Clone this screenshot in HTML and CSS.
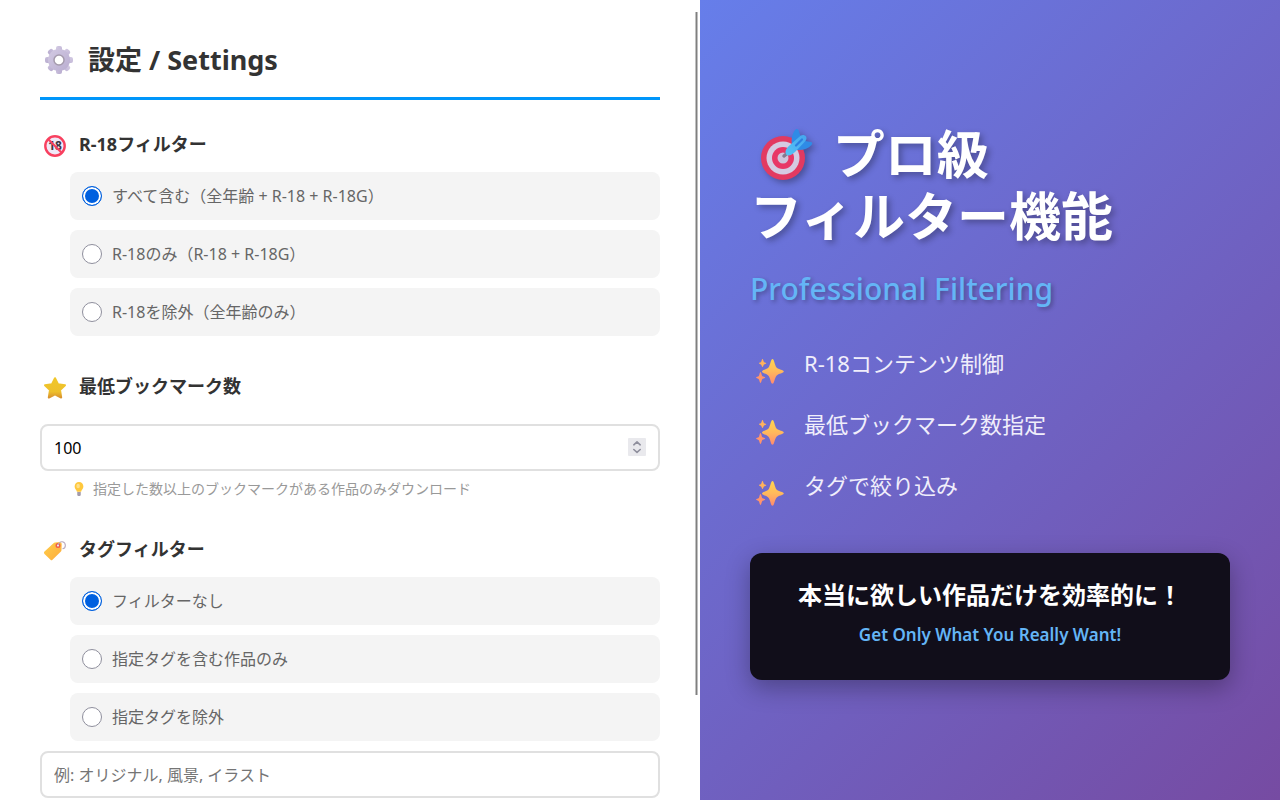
FILE: index.html
```html
<!DOCTYPE html>
<html lang="ja">

<head>
    <meta charset="UTF-8">
    <meta name="viewport" content="width=device-width, initial-scale=1.0">
    <title>設定 / Settings</title>
    <link rel="stylesheet" href="styles.css">
</head>

<body>

    <!-- shared sparkle icon -->
    <svg class="defs" width="0" height="0" aria-hidden="true">
        <defs>
            <linearGradient id="sparkGrad" x1="0" y1="0" x2="0" y2="1">
                <stop offset="0" stop-color="#ffd54f" />
                <stop offset="0.5" stop-color="#ffb95c" />
                <stop offset="1" stop-color="#ff8a70" />
            </linearGradient>
            <symbol id="sparkle" viewBox="0 0 30 28">
                <path fill="url(#sparkGrad)" d="M17.500 2C19.200 2 19.600 8 21.500 10.500C23.500 12.700 28.800 12.800 28.800 14.500C28.800 16.200 23.500 16.500 21.500 18.700C19.600 21 19.200 26.800 17.500 26.800C15.800 26.800 15.400 21 13.500 18.700C11.500 16.500 7 16.200 7 14.500C7 12.800 11.500 12.700 13.500 10.500C15.400 8 15.800 2 17.500 2Z" />
                <path fill="#ffb25c" d="M7.500 2C8.200 2 8.300 4.300 9 5C9.700 5.700 11.300 5.600 11.300 6.200C11.300 6.800 9.700 6.900 9 7.600C8.300 8.300 8.200 10 7.500 10C6.800 10 6.700 8.300 6 7.600C5.300 6.900 4 6.800 4 6.200C4 5.600 5.300 5.700 6 5C6.700 4.300 6.800 2 7.500 2Z" />
                <path fill="#ff946c" d="M5.500 15C6.300 15 6.500 18 7.200 18.900C8 19.800 10.300 19.700 10.300 20.500C10.300 21.300 8 21.300 7.200 22.200C6.500 23 6.300 26 5.500 26C4.700 26 4.500 23 3.800 22.200C3 21.300 1 21.300 1 20.500C1 19.700 3 19.800 3.800 18.900C4.500 18 4.700 15 5.500 15Z" />
            </symbol>
        </defs>
    </svg>

    <div class="layout">
        <main class="settings">
            <h1 class="settings-title">
                <svg class="title-icon" viewBox="0 0 30 30" aria-hidden="true">
                    <defs>
                        <linearGradient id="gearGrad" x1="0" y1="0" x2="1" y2="1">
                            <stop offset="0" stop-color="#d3cae3" />
                            <stop offset="1" stop-color="#b9add0" />
                        </linearGradient>
                    </defs>
                    <g fill="url(#gearGrad)">
                        <rect x="12" y="1" width="6" height="28" rx="2" />
                        <rect x="12" y="1" width="6" height="28" rx="2" transform="rotate(45 15 15)" />
                        <rect x="12" y="1" width="6" height="28" rx="2" transform="rotate(90 15 15)" />
                        <rect x="12" y="1" width="6" height="28" rx="2" transform="rotate(135 15 15)" />
                        <circle cx="15" cy="15" r="11" />
                    </g>
                    <circle cx="15" cy="15" r="5" fill="#fff" stroke="#a59bad" stroke-width="1.500" />
                </svg>
                <span>設定 / Settings</span>
            </h1>

            <form>
                <section class="section">
                    <h2 class="section-title">
                        <svg class="section-icon" viewBox="0 0 24 24" aria-hidden="true">
                            <circle cx="12" cy="12" r="10" fill="#f0e8f7" />
                            <text x="12" y="16" class="age-text">18</text>
                            <circle cx="12" cy="12" r="9.700" fill="none" stroke="#f8405f" stroke-width="2.400" />
                            <path d="M5.300 5.300L18.700 18.700" stroke="#f8405f" stroke-width="2.200" />
                        </svg>
                        <span>R-18フィルター</span>
                    </h2>
                    <div class="options">
                        <label class="option"><input type="radio" name="r18" checked>すべて含む（全年齢 + R-18 + R-18G）</label>
                        <label class="option"><input type="radio" name="r18">R-18のみ（R-18 + R-18G）</label>
                        <label class="option"><input type="radio" name="r18">R-18を除外（全年齢のみ）</label>
                    </div>
                </section>

                <section class="section">
                    <h2 class="section-title">
                        <svg class="section-icon" viewBox="0 0 24 24" aria-hidden="true">
                            <defs>
                                <linearGradient id="starGrad" x1="0" y1="0" x2="0" y2="1">
                                    <stop offset="0" stop-color="#f0c629" />
                                    <stop offset="0.700" stop-color="#eec02c" />
                                    <stop offset="1" stop-color="#d9932f" />
                                </linearGradient>
                            </defs>
                            <path fill="url(#starGrad)" stroke="url(#starGrad)" stroke-width="2" stroke-linejoin="round" d="M12 2.200L15 8.300L22 9.300L17 14L18.200 21.500L12 18.300L5.800 21.500L7 14L2 9.300L9 8.300Z" />
                        </svg>
                        <label for="minBookmarks">最低ブックマーク数</label>
                    </h2>
                    <div class="number-field">
                        <input class="text-input" type="number" id="minBookmarks" value="100" min="0">
                        <svg class="spinner" viewBox="0 0 18 18" aria-hidden="true">
                            <rect width="18" height="18" rx="1" fill="#e9e9ed" />
                            <path d="M5.800 6.800L9 3.900L12.200 6.800M5.800 11.500L9 14.400L12.200 11.500" fill="none" stroke="#8f8f9d" stroke-width="1.600" stroke-linecap="round" stroke-linejoin="round" />
                        </svg>
                    </div>
                    <p class="hint">
                        <svg class="hint-icon" viewBox="0 0 16 16" aria-hidden="true">
                            <path fill="#ffc83d" d="M8 0C5 0 3 2.200 3 5C3 7.500 5 8.500 5.600 11H10.400C11 8.500 13 7.500 13 5C13 2.200 11 0 8 0Z" />
                            <ellipse cx="7" cy="4.500" rx="2" ry="2.500" fill="#ffe08a" />
                            <path fill="#a39baa" d="M6 11.500H10V15L9 16H7L6 15Z" />
                        </svg>
                        <span>指定した数以上のブックマークがある作品のみダウンロード</span>
                    </p>
                </section>

                <section class="section">
                    <h2 class="section-title">
                        <svg class="section-icon" viewBox="0 0 24 24" aria-hidden="true">
                            <defs>
                                <linearGradient id="tagGrad" x1="0" y1="0" x2="1" y2="1">
                                    <stop offset="0" stop-color="#ffcf4a" />
                                    <stop offset="1" stop-color="#fdab3d" />
                                </linearGradient>
                            </defs>
                            <path fill="url(#tagGrad)" d="M12 3.500L16.500 3C17.800 3 18.700 3.800 18.700 5L18.500 11C18.500 11.700 18.200 12.200 17.700 12.700L9.500 20.800C8.800 21.500 8.200 21.500 7.500 20.800L1.500 15C0.800 14.200 0.800 13.300 1.500 12.600L10.500 4.200C11 3.800 11.400 3.600 12 3.500Z" />
                            <circle cx="15" cy="6.500" r="1.800" fill="#fff" stroke="#ef5b4c" stroke-width="1.400" />
                            <path d="M15 6.500C15.500 3.500 17.500 2.400 19.500 2.800C23.300 3.800 23.300 9 19.500 9.800" fill="none" stroke="#b9a9bd" stroke-width="1.100" />
                        </svg>
                        <span>タグフィルター</span>
                    </h2>
                    <div class="options">
                        <label class="option"><input type="radio" name="tag" checked>フィルターなし</label>
                        <label class="option"><input type="radio" name="tag">指定タグを含む作品のみ</label>
                        <label class="option"><input type="radio" name="tag">指定タグを除外</label>
                    </div>
                    <input class="text-input tag-input" type="text" placeholder="例: オリジナル, 風景, イラスト" aria-label="タグ">
                </section>
            </form>
            <div class="scroll-thumb"></div>
        </main>

        <aside class="promo">
            <h2 class="promo-title">
                <svg class="target-icon" viewBox="0 0 60 60" aria-hidden="true">
                    <defs>
                        <linearGradient id="dartGrad" x1="0" y1="1" x2="1" y2="0">
                            <stop offset="0" stop-color="#55c4f5" />
                            <stop offset="1" stop-color="#45a5ee" />
                        </linearGradient>
                    </defs>
                    <circle cx="29" cy="35" r="22" fill="#e23a61" />
                    <circle cx="29" cy="35" r="16.500" fill="#d5cbe2" />
                    <circle cx="29" cy="35" r="11" fill="#e83767" />
                    <circle cx="29" cy="35" r="5.500" fill="#cfc4dc" />
                    <path d="M30 33L36 28" stroke="#85788f" stroke-width="3.500" stroke-linecap="round" />
                    <path fill="#2f8be6" d="M38 22C37 17 38 11 41 7C42 5.500 44 5.500 44.500 7L46.500 13L43 23Z" />
                    <path fill="#2f8be6" d="M46 15L51 18L57 19C58.500 19.500 58.500 21 57.500 22C54 26 49 27.500 43 27Z" />
                    <path fill="url(#dartGrad)" d="M32 31C30.500 28 33 24.500 36 22L46.500 12.800C48.500 11.500 51 12 52 13.500C53 15 52.500 17 51 18.500L41 29C38 32 33.500 34 32 31Z" />
                    <path d="M42 22.500L48 16.500" stroke="#2c7fe0" stroke-width="2.200" stroke-linecap="round" />
                </svg>
                プロ級<br>フィルター機能
            </h2>
            <p class="promo-subtitle">Professional Filtering</p>
            <ul class="features">
                <li><svg class="spark-icon" aria-hidden="true"><use href="#sparkle" /></svg>R-18コンテンツ制御</li>
                <li><svg class="spark-icon" aria-hidden="true"><use href="#sparkle" /></svg>最低ブックマーク数指定</li>
                <li><svg class="spark-icon" aria-hidden="true"><use href="#sparkle" /></svg>タグで絞り込み</li>
            </ul>
            <div class="callout">
                <p class="callout-main">本当に欲しい作品だけを効率的に！</p>
                <p class="callout-sub">Get Only What You Really Want!</p>
            </div>
        </aside>
    </div>

</body>

</html>
```
FILE: styles.css
```css
* {
    box-sizing: border-box;
    margin: 0;
    padding: 0;
}

body {
    font-family: "Segoe UI", "Noto Sans", "Noto Sans CJK JP", sans-serif;
    color: #333;
    background: #fff;
}

.defs {
    position: absolute;
}

.layout {
    display: grid;
    grid-template-columns: 35fr 29fr;
    height: 100vh;
    overflow: hidden;
}

/* left panel */
.settings {
    position: relative;
    padding: 40px;
    overflow: hidden;
    background: #fff;
}

.settings-title {
    display: flex;
    align-items: center;
    gap: 14px;
    padding: 0 4px 17px;
    margin: 0 0 30px;
    border-bottom: 3px solid #0096fa;
    font-size: 27px;
    line-height: 40px;
}

.title-icon {
    width: 30px;
    height: 30px;
}

.section {
    margin-bottom: 36px;
}

.section-title {
    display: flex;
    align-items: center;
    gap: 12px;
    padding-left: 3px;
    margin-bottom: 14px;
    font-size: 18px;
    line-height: 28px;
}

.section-icon {
    width: 24px;
    height: 24px;
    margin-top: 4px;
}

.age-text {
    font-size: 12px;
    font-weight: bold;
    text-anchor: middle;
    fill: #3d3543;
}

.options {
    display: flex;
    flex-direction: column;
    gap: 10px;
    margin-left: 30px;
}

.option {
    display: flex;
    align-items: center;
    gap: 10px;
    padding: 12px;
    border-radius: 8px;
    background: #f4f4f4;
    color: #666;
    font-size: 16px;
    line-height: 24px;
}

.option input {
    appearance: none;
    width: 20px;
    height: 20px;
    border: 1px solid #8f8f9d;
    border-radius: 50%;
    background: #fff;
}

.option input:checked {
    border: 1px solid #0060df;
    background: #0060df;
    box-shadow: inset 0 0 0 2px #fff;
}

.number-field {
    position: relative;
    margin-top: 24px;
}

.text-input {
    display: block;
    width: 100%;
    height: 47px;
    padding: 0 12px;
    border: 2px solid #e0e0e0;
    border-radius: 8px;
    background: #fff;
    color: #000;
    font-family: inherit;
    font-size: 16px;
    appearance: textfield;
}

.text-input::placeholder {
    color: #757575;
}

.text-input::-webkit-inner-spin-button {
    appearance: none;
}

.spinner {
    position: absolute;
    top: 14px;
    right: 14px;
    width: 18px;
    height: 18px;
}

.tag-input {
    margin-top: 10px;
}

.hint {
    display: flex;
    align-items: center;
    gap: 7px;
    margin: 8px 0 0 32px;
    color: #999;
    font-size: 14px;
    line-height: 20px;
}

.hint-icon {
    width: 14px;
    height: 14px;
}

.scroll-thumb {
    position: absolute;
    top: 12px;
    right: 2px;
    bottom: 105px;
    width: 3px;
    border: solid #c0c0c0;
    border-width: 0 1px;
    background: #7f7f7f;
}

/* right panel */
.promo {
    display: flex;
    flex-direction: column;
    justify-content: center;
    padding: 0 50px;
    background: linear-gradient(135deg, #667eea 0%, #764ba2 100%);
    color: #fff;
}

.promo-title {
    font-family: "Noto Sans CJK JP", sans-serif;
    font-size: 52px;
    line-height: 62px;
    text-shadow: 3px 3px 6px rgba(0, 0, 0, 0.3);
}

.target-icon {
    width: 60px;
    height: 60px;
    margin: -6px 7px -6px 4px;
    vertical-align: -3px;
    filter: drop-shadow(3px 3px 3px rgba(0, 0, 0, 0.3));
}

.promo-subtitle {
    margin-top: 22px;
    color: #64b5f6;
    font-size: 30px;
    font-weight: 500;
    line-height: 44px;
    text-shadow: 2px 2px 4px rgba(0, 0, 0, 0.3);
}

.features {
    display: flex;
    flex-direction: column;
    gap: 21px;
    margin-top: 34px;
    list-style: none;
    font-size: 22px;
    line-height: 36px;
}

.features li {
    display: flex;
    gap: 19px;
    min-height: 40px;
    padding-left: 5px;
    color: #f0eefb;
}

.spark-icon {
    align-self: flex-end;
    width: 30px;
    height: 28px;
}

.callout {
    padding: 24px 30px 33px;
    margin-top: 46px;
    border-radius: 12px;
    background: #110e1a;
    box-shadow: 0 8px 24px rgba(0, 0, 0, 0.3);
    text-align: center;
}

.callout-main {
    font-size: 24px;
    font-weight: bold;
    line-height: 36px;
}

.callout-sub {
    margin-top: 10px;
    color: #64b5f6;
    font-size: 17px;
    font-weight: 600;
    line-height: 24px;
}
```
